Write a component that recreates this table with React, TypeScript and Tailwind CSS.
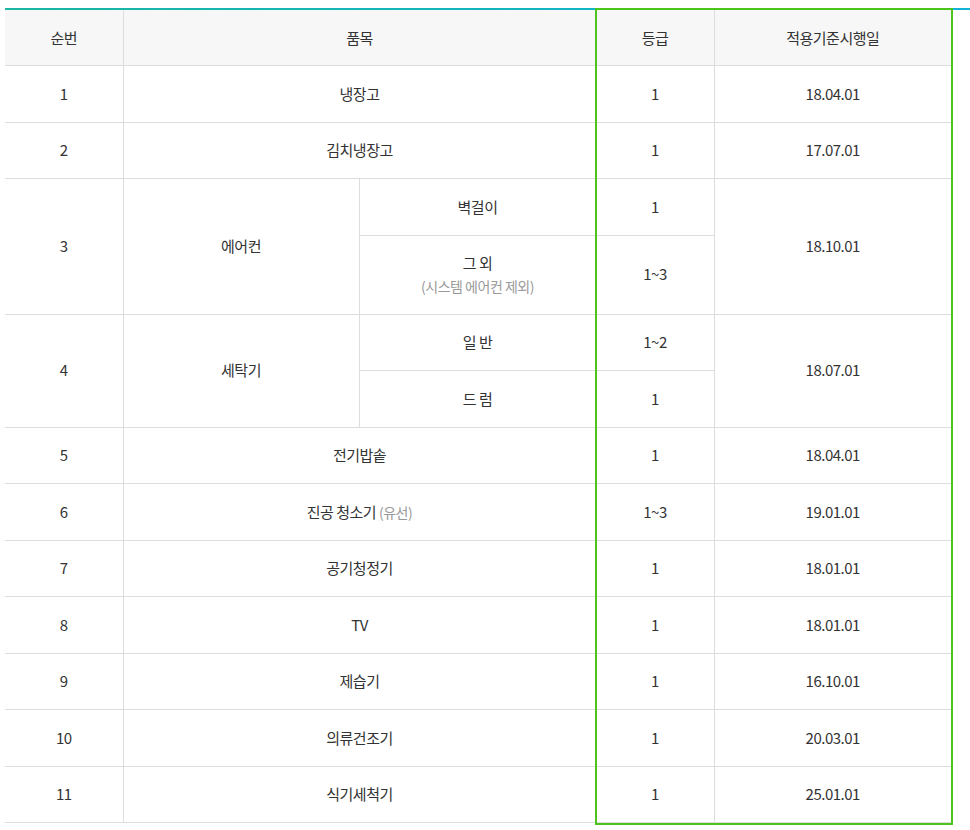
import React from "react";

const td = "border-b border-[#dddddd] text-center align-middle py-[16.5px] leading-[22.5px]";
const br = " border-r border-[#dddddd]";
const th = "font-normal border-b border-[#dddddd] text-center py-[16px] leading-[23px]";

type Row = { n: string; item: React.ReactNode; grade: string; date: string };

const simple: Row[] = [
  { n: "5", item: "전기밥솥", grade: "1", date: "18.04.01" },
  {
    n: "6",
    item: (
      <>
        진공 청소기 <span className="text-[14px] text-[#999999]">(유선)</span>
      </>
    ),
    grade: "1~3",
    date: "19.01.01",
  },
  { n: "7", item: "공기청정기", grade: "1", date: "18.01.01" },
  { n: "8", item: "TV", grade: "1", date: "18.01.01" },
  { n: "9", item: "제습기", grade: "1", date: "16.10.01" },
  { n: "10", item: "의류건조기", grade: "1", date: "20.03.01" },
  { n: "11", item: "식기세척기", grade: "1", date: "25.01.01" },
];

function SimpleRow({ r }: { r: Row }) {
  return (
    <tr>
      <td className={td + br}>{r.n}</td>
      <td className={td + br} colSpan={2}>
        {r.item}
      </td>
      <td className={td + br}>{r.grade}</td>
      <td className={td}>{r.date}</td>
    </tr>
  );
}

export default function App() {
  return (
    <div
      className="bg-white w-[970px] h-[830px] pl-[5px] pt-[8px] text-[15px] tracking-[-0.5px] text-[#333333]"
      style={{ fontFamily: '"Noto Sans CJK KR", "Noto Sans", sans-serif' }}
    >
      <div className="relative">
        <div className="h-[2px] bg-gradient-to-r from-[#1ab6a2] to-[#0fb3d6]" />
        <table className="border-collapse table-fixed w-[946px]">
          <colgroup>
            <col className="w-[118px]" />
            <col className="w-[236px]" />
            <col className="w-[237px]" />
            <col className="w-[118px]" />
            <col className="w-[237px]" />
          </colgroup>
          <thead>
            <tr className="bg-[#f7f7f7]">
              <th className={th + br}>순번</th>
              <th className={th + br} colSpan={2}>
                품목
              </th>
              <th className={th + br}>등급</th>
              <th className={th}>적용기준시행일</th>
            </tr>
          </thead>
          <tbody>
            <SimpleRow r={{ n: "1", item: "냉장고", grade: "1", date: "18.04.01" }} />
            <SimpleRow r={{ n: "2", item: "김치냉장고", grade: "1", date: "17.07.01" }} />
            <tr>
              <td className={td + br} rowSpan={2}>3</td>
              <td className={td + br} rowSpan={2}>에어컨</td>
              <td className={td + br}>벽걸이</td>
              <td className={td + br}>1</td>
              <td className={td} rowSpan={2}>18.10.01</td>
            </tr>
            <tr>
              <td className={td + br}>
                <div>그 외</div>
                <div className="text-[14px] text-[#999999]">(시스템 에어컨 제외)</div>
              </td>
              <td className={td + br}>1~3</td>
            </tr>
            <tr>
              <td className={td + br} rowSpan={2}>4</td>
              <td className={td + br} rowSpan={2}>세탁기</td>
              <td className={td + br}>일 반</td>
              <td className={td + br}>1~2</td>
              <td className={td} rowSpan={2}>18.07.01</td>
            </tr>
            <tr>
              <td className={td + br}>드 럼</td>
              <td className={td + br}>1</td>
            </tr>
            {simple.map((r) => (
              <SimpleRow key={r.n} r={r} />
            ))}
          </tbody>
        </table>
        <div className="absolute left-[590px] top-0 w-[358px] h-[817px] border-2 border-[#4cc41c] pointer-events-none" />
      </div>
    </div>
  );
}
